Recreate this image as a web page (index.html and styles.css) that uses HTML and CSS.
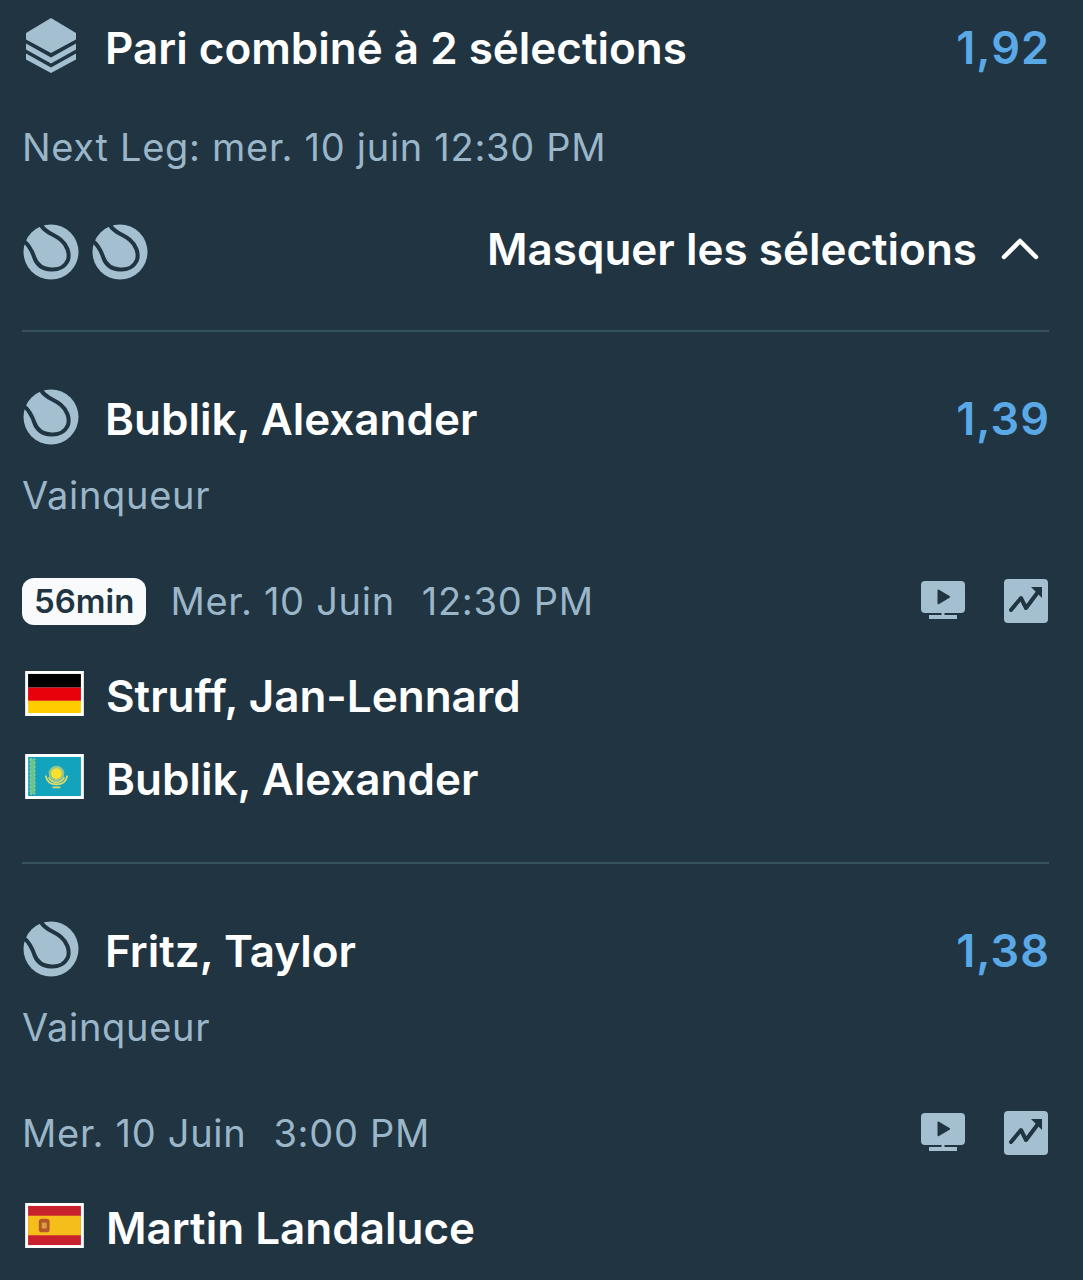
FILE: index.html
```html
<!DOCTYPE html>
<html lang="fr">
<head>
  <meta charset="UTF-8" />
  <meta name="viewport" content="width=device-width, initial-scale=1.0" />
  <title>Pari combiné</title>
  <link rel="stylesheet" href="styles.css">
</head>
<body>
  <svg class="defs" width="0" height="0" aria-hidden="true">
    <defs>
      <symbol id="ball" viewBox="0 0 56 56">
        <circle cx="28" cy="28" r="27.500" fill="#a3bfd0" />
        <path d="M18 1C22 9 31 10 38 16c6 5 9 13 7 20-3 7-10 10-17 9.500C19 45 14 41 11.500 34 9.500 28 7 22 1 17" fill="none" stroke="#203442" stroke-width="4" />
      </symbol>
      <symbol id="tv" viewBox="0 0 44 40">
        <rect x="0" y="0" width="44" height="32" rx="4" fill="#a3bfd0" />
        <rect x="20.500" y="32" width="3" height="2" fill="#a3bfd0" />
        <rect x="8" y="34" width="28" height="4" fill="#a3bfd0" />
        <path d="M16.500 9.500a1 1 0 0 1 1.500-.8l10.500 6.300a1 1 0 0 1 0 1.700l-10.500 6.300a1 1 0 0 1-1.500-.8z" fill="#203442" />
      </symbol>
      <symbol id="trend" viewBox="0 0 44 44">
        <rect width="44" height="44" rx="4" fill="#a3bfd0" />
        <path d="M7 31l10-12 5 10 12-16" fill="none" stroke="#203442" stroke-width="4" stroke-linecap="round" stroke-linejoin="round" />
        <path d="M27 8h11v11z" fill="#203442" />
      </symbol>
    </defs>
  </svg>

  <header class="bet-head">
    <div class="row title-row">
      <svg class="stack-icon" viewBox="0 0 52 56">
        <path d="M26 0L51 15v6.500L26 35 1 21.500V15z" fill="#a3bfd0" />
        <path d="M1 25.500l25 14 25-14v6L26 45.500 1 31.500z" fill="#a3bfd0" />
        <path d="M1 35.500l25 14 25-14v6L26 55 1 41.500z" fill="#a3bfd0" />
      </svg>
      <span class="name">Pari combiné à 2 sélections</span>
      <span class="odds">1,92</span>
    </div>
    <div class="sub next-leg">Next Leg: mer. 10 juin 12:30 PM</div>
    <div class="row toggle-row">
      <div class="balls">
        <svg class="ball"><use href="#ball" /></svg>
        <svg class="ball"><use href="#ball" /></svg>
      </div>
      <span class="toggle">Masquer les sélections</span>
      <svg class="chevron" viewBox="0 0 38 24">
        <path d="M3 21L19 5l16 16" fill="none" stroke="#fff" stroke-width="4.500" stroke-linecap="round" stroke-linejoin="round" />
      </svg>
    </div>
  </header>

  <section class="leg">
    <div class="row title-row">
      <svg class="ball"><use href="#ball" /></svg>
      <span class="name">Bublik, Alexander</span>
      <span class="odds">1,39</span>
    </div>
    <div class="sub market">Vainqueur</div>
    <div class="row meta-row">
      <span class="live">56min</span>
      <span class="sub date">Mer. 10 Juin</span>
      <span class="sub">12:30 PM</span>
      <div class="tools">
        <svg class="tool"><use href="#tv" /></svg>
        <svg class="tool"><use href="#trend" /></svg>
      </div>
    </div>
    <div class="row player">
      <svg class="flag" viewBox="0 0 60 46">
        <rect width="60" height="46" fill="#fff" />
        <rect x="3" y="3" width="54" height="14" fill="#000" />
        <rect x="3" y="17" width="54" height="13.500" fill="#e8000b" />
        <rect x="3" y="30.500" width="54" height="12.500" fill="#ffcc00" />
      </svg>
      <span class="name">Struff, Jan-Lennard</span>
    </div>
    <div class="row player">
      <svg class="flag" viewBox="0 0 60 46">
        <rect width="60" height="46" fill="#fff" />
        <rect x="3" y="3" width="54" height="40" fill="#14a3bd" />
        <rect x="5" y="5" width="5" height="36" fill="#6ec28f" stroke="#a8d68a" stroke-dasharray="2 2" />
        <circle cx="32" cy="20" r="8" fill="#e8dc6a" opacity="0.6" />
        <circle cx="32" cy="20" r="5.500" fill="#f9e02f" />
        <path d="M21 22c1 6 5 9 11 9s10-3 11-9M24 24c2 4 5 5 8 5s6-1 8-5M28 34h8" fill="none" stroke="#dcdc6a" stroke-width="1.800" />
      </svg>
      <span class="name">Bublik, Alexander</span>
    </div>
  </section>

  <section class="leg">
    <div class="row title-row">
      <svg class="ball"><use href="#ball" /></svg>
      <span class="name">Fritz, Taylor</span>
      <span class="odds">1,38</span>
    </div>
    <div class="sub market">Vainqueur</div>
    <div class="row meta-row">
      <span class="sub date">Mer. 10 Juin</span>
      <span class="sub">3:00 PM</span>
      <div class="tools">
        <svg class="tool"><use href="#tv" /></svg>
        <svg class="tool"><use href="#trend" /></svg>
      </div>
    </div>
    <div class="row player">
      <svg class="flag" viewBox="0 0 60 46">
        <rect width="60" height="46" fill="#fff" />
        <rect x="3" y="3" width="54" height="40" fill="#c8202c" />
        <rect x="3" y="13" width="54" height="20" fill="#f6be1a" />
        <rect x="14" y="16" width="11" height="14" rx="3" fill="#b5572b" />
        <rect x="17" y="20" width="5" height="6" fill="#d8a040" />
      </svg>
      <span class="name">Martin Landaluce</span>
    </div>
  </section>
</body>
</html>
```

FILE: styles.css
```css
* {
  box-sizing: border-box;
}
body {
  margin: 0;
  padding: 0 34px 0 22px;
  font-family: Inter, Lato, sans-serif;
  font-variant-ligatures: none;
  background: #203442;
  color: #fff;
}
.defs {
  display: block;
}
.row {
  display: flex;
  align-items: center;
}
.title-row {
  height: 56px;
}
.bet-head {
  padding-top: 18px;
  height: 332px;
  border-bottom: 2px solid #35525f;
}
.bet-head .title-row {
  margin-bottom: 49px;
}
.stack-icon {
  width: 52px;
  height: 56px;
  margin: 0 2px 0 3px;
}
.name {
  font-size: 44px;
  font-weight: 600;
  margin: 3px 0 0 26px;
}
.odds {
  margin: 3px -1px 0 auto;
  font-size: 45px;
  font-weight: 600;
  letter-spacing: 1px;
  color: #5aa9e6;
}
.sub {
  font-size: 38px;
  font-weight: 400;
  line-height: 48px;
  letter-spacing: 0.7px;
  color: #9ab6c8;
}
.next-leg {
  height: 48px;
}
.toggle-row {
  margin-top: 53px;
}
.balls {
  display: flex;
  gap: 12px;
  margin-right: auto;
}
.ball {
  width: 56px;
  height: 56px;
  flex: none;
  margin-left: 1px;
}
.toggle {
  font-size: 44px;
  font-weight: 600;
  margin-top: -6px;
}
.chevron {
  width: 38px;
  height: 24px;
  margin: -8px 10px 0 24px;
}
.leg {
  padding: 57px 0 57px;
  border-bottom: 2px solid #35525f;
}
.leg:last-child {
  padding-bottom: 0;
  border-bottom: 0;
}
.market {
  margin-top: 26px;
}
.meta-row {
  margin-top: 58px;
  height: 48px;
}
.live {
  background: #f8fafb;
  color: #203442;
  font-size: 33px;
  font-weight: 600;
  height: 47px;
  line-height: 47px;
  padding: 0 12px;
  border-radius: 12px;
  margin-right: 24px;
}
.date {
  margin-right: 27px;
}
.tools {
  display: flex;
  gap: 39px;
  margin: 0 1px 0 auto;
}
.tool {
  width: 44px;
  height: 44px;
}
.player {
  height: 56px;
  margin-top: 27px;
}
.meta-row + .player {
  margin-top: 41px;
}
.flag {
  width: 59px;
  height: 45px;
  margin: -2px 0 0 3px;
  flex: none;
}
.player .name {
  margin-left: 22px;
}
```
